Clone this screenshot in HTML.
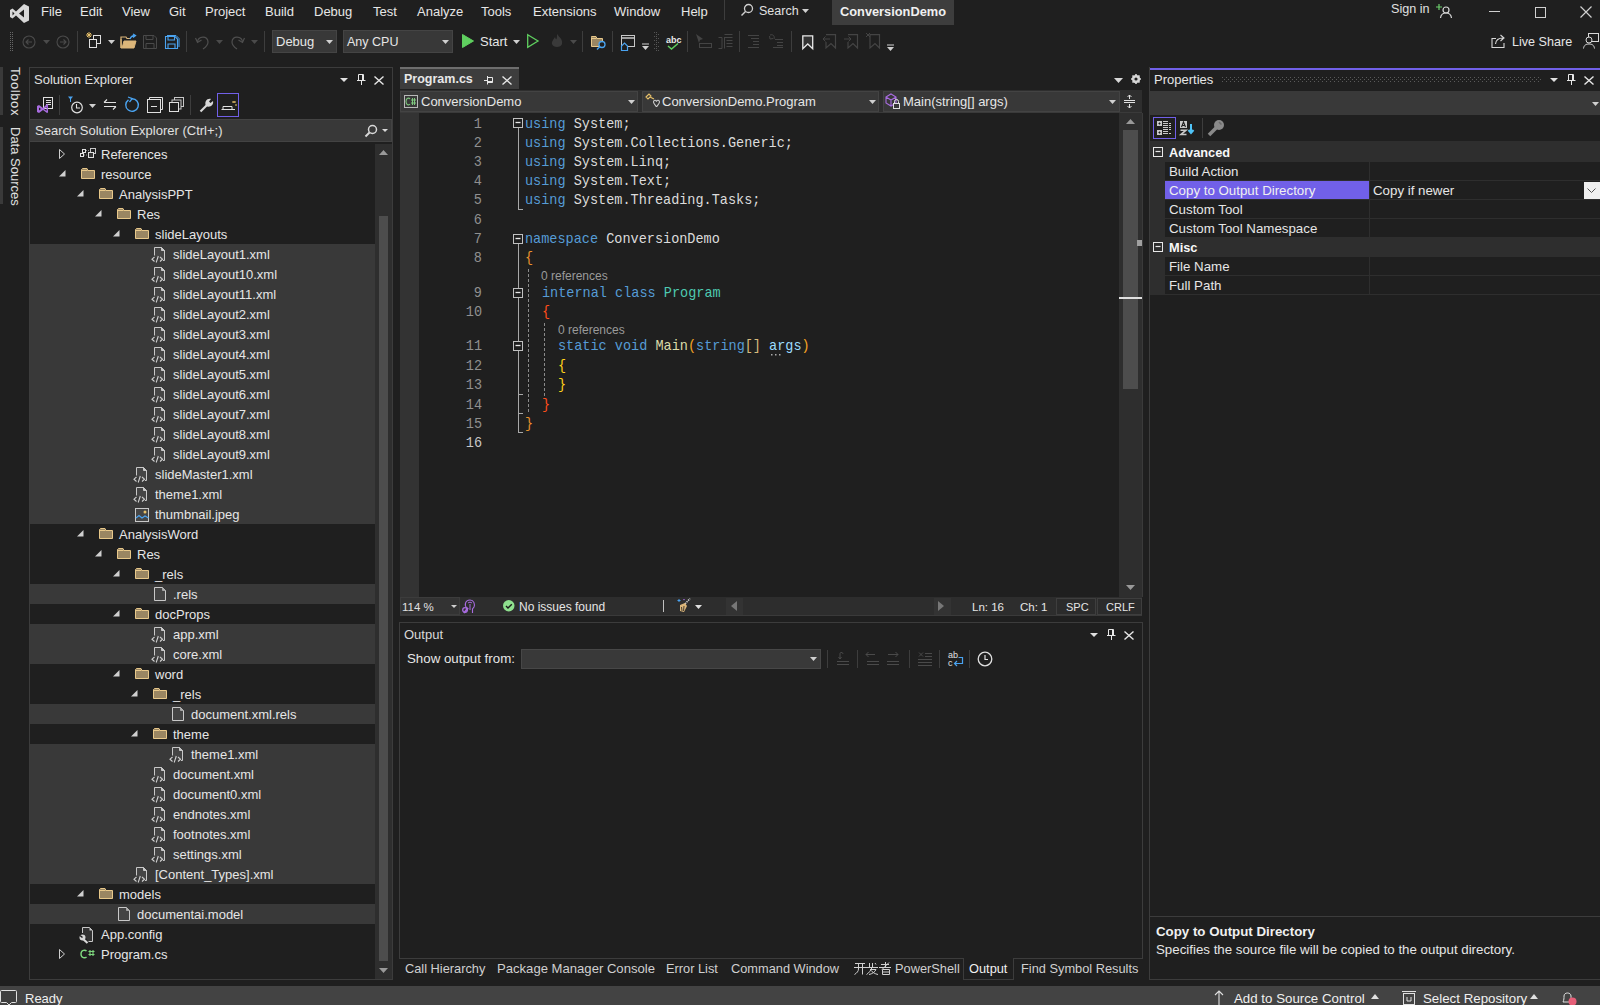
<!DOCTYPE html><html><head><meta charset="utf-8"><style>
*{margin:0;padding:0;box-sizing:border-box}
html,body{width:1600px;height:1005px;overflow:hidden;background:#1f1f1f;font-family:"Liberation Sans",sans-serif;color:#e0e0e0;font-size:13px}
.a{position:absolute;white-space:pre}
.t{position:absolute;white-space:pre;line-height:16px}
.mono{font-family:"Liberation Mono",monospace}
svg{position:absolute;overflow:visible}
</style></head><body><svg style="left:9px;top:3px" width="21" height="21" viewBox="0 0 21 21"><path d="M15 1 L20 3.5 V17.5 L15 20 L7 12.5 L3.5 15.5 L1 14 V7 L3.5 5.5 L7 8.5 Z M15 6.5 L10 10.5 L15 14.5 Z M3.5 8.5 V12.5 L5.5 10.5 Z" fill="#d8d8d8" fill-rule="evenodd"/></svg><div class="t" style="left:41px;top:4px;font-size:13px;color:#e6e6e6;font-weight:400;">File</div><div class="t" style="left:80px;top:4px;font-size:13px;color:#e6e6e6;font-weight:400;">Edit</div><div class="t" style="left:122px;top:4px;font-size:13px;color:#e6e6e6;font-weight:400;">View</div><div class="t" style="left:169px;top:4px;font-size:13px;color:#e6e6e6;font-weight:400;">Git</div><div class="t" style="left:205px;top:4px;font-size:13px;color:#e6e6e6;font-weight:400;">Project</div><div class="t" style="left:265px;top:4px;font-size:13px;color:#e6e6e6;font-weight:400;">Build</div><div class="t" style="left:314px;top:4px;font-size:13px;color:#e6e6e6;font-weight:400;">Debug</div><div class="t" style="left:373px;top:4px;font-size:13px;color:#e6e6e6;font-weight:400;">Test</div><div class="t" style="left:417px;top:4px;font-size:13px;color:#e6e6e6;font-weight:400;">Analyze</div><div class="t" style="left:481px;top:4px;font-size:13px;color:#e6e6e6;font-weight:400;">Tools</div><div class="t" style="left:533px;top:4px;font-size:13px;color:#e6e6e6;font-weight:400;">Extensions</div><div class="t" style="left:614px;top:4px;font-size:13px;color:#e6e6e6;font-weight:400;">Window</div><div class="t" style="left:681px;top:4px;font-size:13px;color:#e6e6e6;font-weight:400;">Help</div><div class="a" style="left:724px;top:0px;width:1px;height:20px;background:#3d3d3d;"></div><svg style="left:740px;top:3px" width="14" height="14" viewBox="0 0 14 14"><circle cx="8.5" cy="5.5" r="4" fill="none" stroke="#d0d0d0" stroke-width="1.3"/><path d="M5.5 8.5 L1.5 12.5" stroke="#d0d0d0" stroke-width="1.5"/></svg><div class="t" style="left:759px;top:3px;font-size:12.5px;color:#e0e0e0;font-weight:400;">Search</div><svg style="left:802px;top:9px" width="7" height="4" viewBox="0 0 7 4"><path d="M0 0 H7 L3.5 4 Z" fill="#d0d0d0"/></svg><div class="a" style="left:832px;top:0px;width:122px;height:25px;background:#3d3d3d;"></div><div class="t" style="left:840px;top:4px;font-size:12.8px;color:#f0f0f0;font-weight:700;">ConversionDemo</div><div class="t" style="left:1391px;top:1px;font-size:12.6px;color:#e0e0e0;font-weight:400;">Sign in</div><svg style="left:1437px;top:3px" width="16" height="16" viewBox="0 0 16 16"><path d="M2 1 V7 M-1 4 H5" stroke="#6ccf6c" stroke-width="1.2"/><circle cx="9" cy="7" r="3" fill="none" stroke="#d8d8d8" stroke-width="1.2"/><path d="M3.5 15 C4 11 6.5 10 9 10 C11.5 10 14 11 14.5 15" fill="none" stroke="#d8d8d8" stroke-width="1.2"/></svg><div class="a" style="left:1489px;top:11px;width:11px;height:1px;background:#d0d0d0;"></div><div class="a" style="left:1535px;top:7px;width:11px;height:11px;background:transparent;border:1.2px solid #d0d0d0"></div><svg style="left:1580px;top:6px" width="12" height="12" viewBox="0 0 12 12"><path d="M0.5 0.5 L11.5 11.5 M11.5 0.5 L0.5 11.5" stroke="#d0d0d0" stroke-width="1.2"/></svg><svg style="left:9px;top:32px" width="6" height="20" viewBox="0 0 6 20"><rect x="1" y="0" width="1" height="1" fill="#666"/><rect x="3" y="0" width="1" height="1" fill="#666"/><rect x="3" y="2" width="1" height="1" fill="#666"/><rect x="1" y="2" width="1" height="1" fill="#666"/><rect x="1" y="4" width="1" height="1" fill="#666"/><rect x="3" y="4" width="1" height="1" fill="#666"/><rect x="3" y="6" width="1" height="1" fill="#666"/><rect x="1" y="6" width="1" height="1" fill="#666"/><rect x="1" y="8" width="1" height="1" fill="#666"/><rect x="3" y="8" width="1" height="1" fill="#666"/><rect x="3" y="10" width="1" height="1" fill="#666"/><rect x="1" y="10" width="1" height="1" fill="#666"/><rect x="1" y="12" width="1" height="1" fill="#666"/><rect x="3" y="12" width="1" height="1" fill="#666"/><rect x="3" y="14" width="1" height="1" fill="#666"/><rect x="1" y="14" width="1" height="1" fill="#666"/><rect x="1" y="16" width="1" height="1" fill="#666"/><rect x="3" y="16" width="1" height="1" fill="#666"/><rect x="3" y="18" width="1" height="1" fill="#666"/><rect x="1" y="18" width="1" height="1" fill="#666"/></svg><svg style="left:22px;top:35px" width="14" height="14" viewBox="0 0 14 14"><circle cx="7" cy="7" r="6" fill="none" stroke="#4a4a4a" stroke-width="1.1"/><path d="M10 7 H4 M6.5 4.5 L4 7 L6.5 9.5" fill="none" stroke="#4a4a4a" stroke-width="1.1"/></svg><svg style="left:43px;top:40px" width="7" height="4" viewBox="0 0 7 4"><path d="M0 0 H7 L3.5 4 Z" fill="#4a4a4a"/></svg><svg style="left:56px;top:35px" width="14" height="14" viewBox="0 0 14 14"><circle cx="7" cy="7" r="6" fill="none" stroke="#4a4a4a" stroke-width="1.1"/><path d="M4 7 H10 M7.5 4.5 L10 7 L7.5 9.5" fill="none" stroke="#4a4a4a" stroke-width="1.1"/></svg><div class="a" style="left:77px;top:31px;width:1px;height:21px;background:#3d3d3d;"></div><svg style="left:86px;top:32px" width="17" height="17" viewBox="0 0 17 17"><path d="M3 0 V6 M0 3 H6 M1 1 L5 5 M5 1 L1 5" stroke="#e8c16a" stroke-width="1"/><rect x="7.5" y="3.5" width="7" height="8" fill="#1f1f1f" stroke="#e0e0e0"/><rect x="3.5" y="7.5" width="7" height="8" fill="#1f1f1f" stroke="#e0e0e0"/></svg><svg style="left:108px;top:40px" width="7" height="4" viewBox="0 0 7 4"><path d="M0 0 H7 L3.5 4 Z" fill="#d0d0d0"/></svg><svg style="left:120px;top:34px" width="17" height="15" viewBox="0 0 17 15"><path d="M1 5 V14 H14 L16 7 H4 L2 14" fill="#dcb67a" stroke="#dcb67a"/><path d="M1 14 V3 H6 L7 4.5 H10" fill="none" stroke="#dcb67a" stroke-width="1.2"/><path d="M10 5 C11 2 13 1.5 15 1.5 M13 0 L15.5 1.5 L13 3.5" fill="none" stroke="#4aa3f0" stroke-width="1.3"/></svg><svg style="left:143px;top:35px" width="14" height="14" viewBox="0 0 14 14"><path d="M0.5 0.5 H11 L13.5 3 V13.5 H0.5 Z M3 0.5 V4.5 H10 V0.5 M3 13.5 V8.5 H11 V13.5" fill="none" stroke="#4a4a4a"/></svg><svg style="left:165px;top:35px" width="15" height="15" viewBox="0 0 15 15"><path d="M0.5 1.5 H10 L12.5 4 V13.5 H0.5 Z M3 1.5 V5 H9.5 V1.5 M3 13.5 V9 H10 V13.5" fill="none" stroke="#4aa3f0" stroke-width="1.1"/><path d="M2 0.5 H11 L14 3.5 V12" fill="none" stroke="#4aa3f0"/></svg><div class="a" style="left:186px;top:31px;width:1px;height:21px;background:#3d3d3d;"></div><svg style="left:195px;top:34px" width="15" height="16" viewBox="0 0 15 16"><path d="M2.5 8 C3 2 13 1 13 8 C13 11 11 13 8 15" fill="none" stroke="#4f4f4f" stroke-width="1.2"/><path d="M0.5 4 L2.5 8.5 L6.5 6" fill="none" stroke="#4f4f4f" stroke-width="1.2"/></svg><svg style="left:216px;top:40px" width="7" height="4" viewBox="0 0 7 4"><path d="M0 0 H7 L3.5 4 Z" fill="#4a4a4a"/></svg><svg style="left:230px;top:34px" width="15" height="16" viewBox="0 0 15 16"><path d="M12.5 8 C12 2 2 1 2 8 C2 11 4 13 7 15" fill="none" stroke="#4f4f4f" stroke-width="1.2"/><path d="M14.5 4 L12.5 8.5 L8.5 6" fill="none" stroke="#4f4f4f" stroke-width="1.2"/></svg><svg style="left:251px;top:40px" width="7" height="4" viewBox="0 0 7 4"><path d="M0 0 H7 L3.5 4 Z" fill="#4a4a4a"/></svg><div class="a" style="left:264px;top:31px;width:1px;height:21px;background:#3d3d3d;"></div><div class="a" style="left:272px;top:30px;width:65px;height:23px;background:#383838;border:1px solid #444"></div><div class="t" style="left:276px;top:34px;font-size:13px;color:#e6e6e6;font-weight:400;">Debug</div><svg style="left:326px;top:40px" width="7" height="4" viewBox="0 0 7 4"><path d="M0 0 H7 L3.5 4 Z" fill="#d0d0d0"/></svg><div class="a" style="left:343px;top:30px;width:110px;height:23px;background:#383838;border:1px solid #444"></div><div class="t" style="left:347px;top:34px;font-size:12.5px;color:#e6e6e6;font-weight:400;">Any CPU</div><svg style="left:442px;top:40px" width="7" height="4" viewBox="0 0 7 4"><path d="M0 0 H7 L3.5 4 Z" fill="#d0d0d0"/></svg><svg style="left:462px;top:34px" width="12" height="14" viewBox="0 0 12 14"><path d="M0.5 0.5 L11.5 7 L0.5 13.5 Z" fill="#5fcf5f" stroke="#5fcf5f"/></svg><div class="t" style="left:480px;top:34px;font-size:13px;color:#e6e6e6;font-weight:400;">Start</div><svg style="left:513px;top:40px" width="7" height="4" viewBox="0 0 7 4"><path d="M0 0 H7 L3.5 4 Z" fill="#d0d0d0"/></svg><svg style="left:527px;top:34px" width="12" height="14" viewBox="0 0 12 14"><path d="M0.7 0.7 L11 7 L0.7 13.3 Z" fill="none" stroke="#5fcf5f" stroke-width="1.3"/></svg><svg style="left:550px;top:33px" width="14" height="16" viewBox="0 0 14 16"><path d="M7 1 C9 4 13 6 12 11 C11 15 3 15 2 11 C1.5 8 4 6 5 4 C6 7 7 8 7 1 Z" fill="#3a3a3a"/></svg><svg style="left:570px;top:40px" width="7" height="4" viewBox="0 0 7 4"><path d="M0 0 H7 L3.5 4 Z" fill="#4a4a4a"/></svg><div class="a" style="left:582px;top:31px;width:1px;height:21px;background:#3d3d3d;"></div><svg style="left:590px;top:35px" width="17" height="16" viewBox="0 0 17 16"><path d="M1.5 2.5 V11.5 H12.5 V3.5 H7 L6 1.5 H1.5 Z" fill="#9a8662" stroke="#e8c88a"/><path d="M2 3.5 H6.5" stroke="#e8c88a"/><circle cx="12" cy="9.5" r="3" fill="#1f1f1f" stroke="#4aa3f0" stroke-width="1.3"/><path d="M9.8 11.8 L7 14.5" stroke="#4aa3f0" stroke-width="1.4"/></svg><div class="a" style="left:612px;top:31px;width:1px;height:21px;background:#3d3d3d;"></div><svg style="left:620px;top:35px" width="17" height="17" viewBox="0 0 17 17"><rect x="1.5" y="0.5" width="13" height="11" fill="#1f1f1f" stroke="#c8c8c8"/><path d="M1.5 3 H14.5" stroke="#c8c8c8" stroke-width="1.5"/><path d="M1.5 15.5 V11 L4.5 8 L7.5 11 V15.5 Z" fill="#1f1f1f" stroke="#4aa3f0" stroke-width="1.2"/></svg><svg style="left:642px;top:44px" width="7" height="6" viewBox="0 0 7 6"><path d="M0 0 H7" stroke="#d0d0d0"/><path d="M0 2 H7 L3.5 6 Z" fill="#d0d0d0"/></svg><svg style="left:654px;top:32px" width="5" height="20" viewBox="0 0 5 20"><rect x="0" y="0" width="1" height="1" fill="#555"/><rect x="2" y="0" width="1" height="1" fill="#555"/><rect x="2" y="2" width="1" height="1" fill="#555"/><rect x="4" y="2" width="1" height="1" fill="#555"/><rect x="0" y="4" width="1" height="1" fill="#555"/><rect x="2" y="4" width="1" height="1" fill="#555"/><rect x="2" y="6" width="1" height="1" fill="#555"/><rect x="4" y="6" width="1" height="1" fill="#555"/><rect x="0" y="8" width="1" height="1" fill="#555"/><rect x="2" y="8" width="1" height="1" fill="#555"/><rect x="2" y="10" width="1" height="1" fill="#555"/><rect x="4" y="10" width="1" height="1" fill="#555"/><rect x="0" y="12" width="1" height="1" fill="#555"/><rect x="2" y="12" width="1" height="1" fill="#555"/><rect x="2" y="14" width="1" height="1" fill="#555"/><rect x="4" y="14" width="1" height="1" fill="#555"/><rect x="0" y="16" width="1" height="1" fill="#555"/><rect x="2" y="16" width="1" height="1" fill="#555"/><rect x="2" y="18" width="1" height="1" fill="#555"/><rect x="4" y="18" width="1" height="1" fill="#555"/></svg><div class="t" style="left:666px;top:32px;font-size:9px;color:#e8e8e8;font-weight:700;">abc</div><svg style="left:667px;top:43px" width="12" height="7" viewBox="0 0 12 7"><path d="M1 3 L4.5 6 L11 0.5" fill="none" stroke="#5fcf5f" stroke-width="1.5"/></svg><div class="a" style="left:687px;top:31px;width:1px;height:21px;background:#3d3d3d;"></div><svg style="left:695px;top:34px" width="17" height="15" viewBox="0 0 17 15"><path d="M1 0 L4 9 L5 6 L8 5 Z" fill="#444"/><rect x="4.5" y="9.5" width="12" height="4" fill="none" stroke="#444"/></svg><svg style="left:718px;top:34px" width="15" height="15" viewBox="0 0 15 15"><path d="M0.5 3.5 H4 V14.5 H0.5 M6.5 0.5 H14.5 M6.5 3.5 H14.5 M8.5 6.5 H14.5 M8.5 9.5 H14.5 M8.5 12.5 H14.5 M6.5 3 V14.5" fill="none" stroke="#444"/></svg><div class="a" style="left:739px;top:31px;width:1px;height:21px;background:#3d3d3d;"></div><svg style="left:748px;top:35px" width="12" height="13" viewBox="0 0 12 13"><path d="M0 0.5 H11 M3 3.5 H11 M5 6.5 H11 M5 9.5 H11 M0 12.5 H11" stroke="#444"/></svg><svg style="left:769px;top:34px" width="15" height="14" viewBox="0 0 15 14"><path d="M1 1 C4 0 6 2 5 5 M0.5 2 L1 5 L4 4.5 M6 5.5 H14 M8 8.5 H14 M8 11.5 H14 M4 13.5 H14" fill="none" stroke="#444"/></svg><div class="a" style="left:791px;top:31px;width:1px;height:21px;background:#3d3d3d;"></div><svg style="left:802px;top:35px" width="12" height="15" viewBox="0 0 12 15"><path d="M0.8 0.8 H10.7 V13.8 L5.75 9 L0.8 13.8 Z" fill="#333" stroke="#e8e8e8" stroke-width="1.3"/></svg><svg style="left:822px;top:34px" width="15" height="15" viewBox="0 0 15 15"><path d="M4 0.7 H13.5 V14 L9 9.5 L4 14 V8" fill="none" stroke="#444" stroke-width="1.2"/><path d="M8 5 H1 M3.5 2.5 L1 5 L3.5 7.5" fill="none" stroke="#444"/></svg><svg style="left:844px;top:34px" width="15" height="15" viewBox="0 0 15 15"><path d="M4 0.7 H13.5 V14 L9 9.5 L4 14 V8" fill="none" stroke="#444" stroke-width="1.2"/><path d="M0 5 H7 M4.5 2.5 L7 5 L4.5 7.5" fill="none" stroke="#444"/></svg><svg style="left:866px;top:33px" width="15" height="16" viewBox="0 0 15 16"><path d="M4 1.7 H13.5 V15 L9 10.5 L4 15 Z" fill="none" stroke="#444" stroke-width="1.2"/><path d="M0 0 L4 4 M4 0 L0 4" stroke="#444"/></svg><svg style="left:887px;top:45px" width="7" height="6" viewBox="0 0 7 6"><path d="M0 0 H7" stroke="#d0d0d0"/><path d="M0 2 H7 L3.5 6 Z" fill="#d0d0d0"/></svg><svg style="left:1491px;top:33px" width="16" height="16" viewBox="0 0 16 16"><path d="M5 5.5 H1 V14.5 H13 V10" fill="none" stroke="#d8d8d8" stroke-width="1.1"/><path d="M4.5 11 C5 6 8 5 12 5 M9.5 2 L13 5 L9.5 8" fill="none" stroke="#d8d8d8" stroke-width="1.1"/></svg><div class="t" style="left:1512px;top:34px;font-size:12.6px;color:#e6e6e6;font-weight:400;">Live Share</div><svg style="left:1583px;top:33px" width="16" height="16" viewBox="0 0 16 16"><rect x="5.5" y="0.5" width="10" height="8" fill="none" stroke="#d8d8d8"/><circle cx="6" cy="7" r="3" fill="#1f1f1f" stroke="#d8d8d8"/><path d="M0.5 15.5 C1 12 3 11 6 11 C9 11 11 12 11.5 15.5" fill="none" stroke="#d8d8d8"/></svg><div class="a" style="left:0px;top:67px;width:3px;height:48px;background:#3a3a3a;"></div><div class="a" style="left:0px;top:127px;width:3px;height:77px;background:#3a3a3a;"></div><div class="a" style="left:22px;top:67px;transform-origin:0 0;transform:rotate(90deg);font-size:13px;line-height:13px;letter-spacing:0.6px;color:#e0e0e0">Toolbox</div><div class="a" style="left:22px;top:127px;transform-origin:0 0;transform:rotate(90deg);font-size:13px;line-height:13px;color:#e0e0e0">Data Sources</div><div class="a" style="left:29px;top:67px;width:364px;height:913px;background:#1f1f1f;border:1px solid #3c3c3c"></div><div class="t" style="left:34px;top:72px;font-size:13px;color:#e0e0e0;font-weight:400;">Solution Explorer</div><svg style="left:340px;top:78px" width="8" height="4" viewBox="0 0 8 4"><path d="M0 0 H8 L4 4 Z" fill="#e0e0e0"/></svg><svg style="left:357px;top:74px" width="9" height="12" viewBox="0 0 9 12"><path d="M1.5 0.5 H6.5 V6.5 H1.5 Z" fill="none" stroke="#e8e8e8"/><rect x="5" y="1" width="1.5" height="5.5" fill="#e8e8e8"/><path d="M0 6.5 H8.5 M4.5 6.5 V11" stroke="#e8e8e8"/></svg><svg style="left:374px;top:76px" width="10" height="9" viewBox="0 0 10 9"><path d="M0.5 0.5 L9.5 8.5 M9.5 0.5 L0.5 8.5" stroke="#e8e8e8" stroke-width="1.4"/></svg><svg style="left:36px;top:96px" width="17" height="18" viewBox="0 0 17 18"><rect x="7.5" y="1.5" width="9" height="11" fill="#1f1f1f" stroke="#e0e0e0"/><path d="M10 4.5 H15 M10 6.5 H15 M10 8.5 H15" stroke="#e0e0e0"/><path d="M1 10 L3 9 L7 12 L11 8 L12 8.5 V16.5 L11 17 L7 14 L3 17 L1 16 Z M3 11.5 V14.5 L5 13 Z M8 13 L10.5 15 V11 Z" fill="#a86ce0" fill-rule="evenodd"/></svg><div class="a" style="left:59px;top:95px;width:1px;height:20px;background:#3d3d3d;"></div><svg style="left:67px;top:96px" width="17" height="18" viewBox="0 0 17 18"><path d="M1 0.5 H6 L4 3 V6 H3 V3 Z" fill="#4aa3f0"/><circle cx="10" cy="11.5" r="5.3" fill="none" stroke="#e0e0e0" stroke-width="1.2"/><path d="M9.5 8 V12 H13" fill="none" stroke="#e0e0e0" stroke-width="1.1"/></svg><svg style="left:89px;top:104px" width="7" height="4" viewBox="0 0 7 4"><path d="M0 0 H7 L3.5 4 Z" fill="#d0d0d0"/></svg><svg style="left:103px;top:98px" width="14" height="13" viewBox="0 0 14 13"><path d="M1 4.5 H13 M1 4.5 L4 1.5 M13 8.5 H1 M13 8.5 L10 11.5" stroke="#e0e0e0" stroke-width="1.1" fill="none"/></svg><svg style="left:124px;top:97px" width="16" height="16" viewBox="0 0 16 16"><path d="M4.5 2.8 A6.3 6.3 0 1 0 8 1.7" fill="none" stroke="#4aa3f0" stroke-width="1.4"/><path d="M4 0 L8.2 1.6 L5.5 5" fill="none" stroke="#4aa3f0" stroke-width="1.3"/></svg><svg style="left:147px;top:97px" width="16" height="16" viewBox="0 0 16 16"><path d="M2.5 2.5 V0.5 H15.5 V12.5 H13.5" fill="none" stroke="#e0e0e0"/><rect x="0.5" y="2.5" width="13" height="13" fill="#1f1f1f" stroke="#e0e0e0"/><path d="M4 9.5 H10" stroke="#e0e0e0"/></svg><svg style="left:169px;top:97px" width="15" height="15" viewBox="0 0 15 15"><rect x="5.5" y="0.5" width="9" height="9" fill="none" stroke="#c8c8c8"/><rect x="3" y="3" width="9" height="9" fill="#1f1f1f" stroke="#c8c8c8"/><rect x="0.5" y="5.5" width="9" height="9" fill="#1f1f1f" stroke="#e0e0e0"/></svg><div class="a" style="left:190px;top:95px;width:1px;height:20px;background:#3d3d3d;"></div><svg style="left:199px;top:97px" width="16" height="16" viewBox="0 0 16 16"><path d="M1.5 14.5 L8 8" stroke="#d8d8d8" stroke-width="2.2"/><path d="M7 9 C5 5 8 1 12 2 L10 4.5 L11.5 6 L14 4 C15 8 11 11 7 9" fill="#d8d8d8"/></svg><div class="a" style="left:217px;top:93px;width:22px;height:24px;background:transparent;border:1px solid #7160e8"></div><svg style="left:221px;top:100px" width="16" height="10" viewBox="0 0 16 10"><path d="M0.5 9.5 H14 M2 9 V6.5 H11 V9" fill="none" stroke="#e0e0e0"/><path d="M13 1 V3 M11 2 H15 M14 5 H16" stroke="#e8c16a"/></svg><div class="a" style="left:30px;top:119px;width:362px;height:23px;background:#383838;border:1px solid #434343;border-left:none"></div><div class="t" style="left:35px;top:123px;font-size:13px;color:#e0e0e0;font-weight:400;">Search Solution Explorer (Ctrl+;)</div><svg style="left:364px;top:124px" width="14" height="14" viewBox="0 0 14 14"><circle cx="8.5" cy="5.5" r="4" fill="none" stroke="#d8d8d8" stroke-width="1.5"/><path d="M5.5 8.5 L1.5 12.5" stroke="#d8d8d8" stroke-width="2"/></svg><svg style="left:382px;top:129px" width="6" height="3" viewBox="0 0 6 3"><path d="M0 0 H6 L3 3 Z" fill="#d8d8d8"/></svg><div class="a" style="left:0;top:0;width:375px;height:978px;overflow:hidden;clip-path:inset(142px 0 0 30px)"><svg style="left:59px;top:149px" width="6" height="10" viewBox="0 0 6 10"><path d="M0.5 0.5 L5.5 5 L0.5 9.5 Z" fill="none" stroke="#d0d0d0"/></svg><svg style="left:80px;top:148px" width="17" height="12" viewBox="0 0 17 12"><rect x="2.5" y="1.5" width="3" height="3" fill="none" stroke="#e0e0e0"/><rect x="0.5" y="5.5" width="3" height="3" fill="none" stroke="#e0e0e0"/><rect x="10.5" y="0.5" width="5" height="5" fill="#1f1f1f" stroke="#c8c8c8"/><rect x="8.5" y="4.5" width="5" height="5" fill="#333" stroke="#e0e0e0"/><path d="M6 2.5 H10 M4 7 H8" stroke="#8a8a8a" stroke-dasharray="1 1"/></svg><div class="t" style="left:101px;top:147px;font-size:13px;color:#e6e6e6;font-weight:400;">References</div><svg style="left:59px;top:170px" width="7" height="7" viewBox="0 0 7 7"><path d="M6.5 0 V6.5 H0 Z" fill="#d0d0d0"/></svg><svg style="left:81px;top:168px" width="15" height="12" viewBox="0 0 15 12"><path d="M0.5 1.5 V10.5 H13.5 V2.5 H7 L6 0.5 H1.5 Z" fill="#9a8662" stroke="#e8c88a"/><path d="M1 2.5 H6.5" stroke="#e8c88a"/></svg><div class="t" style="left:101px;top:167px;font-size:13px;color:#e6e6e6;font-weight:400;">resource</div><svg style="left:77px;top:190px" width="7" height="7" viewBox="0 0 7 7"><path d="M6.5 0 V6.5 H0 Z" fill="#d0d0d0"/></svg><svg style="left:99px;top:188px" width="15" height="12" viewBox="0 0 15 12"><path d="M0.5 1.5 V10.5 H13.5 V2.5 H7 L6 0.5 H1.5 Z" fill="#9a8662" stroke="#e8c88a"/><path d="M1 2.5 H6.5" stroke="#e8c88a"/></svg><div class="t" style="left:119px;top:187px;font-size:13px;color:#e6e6e6;font-weight:400;">AnalysisPPT</div><svg style="left:95px;top:210px" width="7" height="7" viewBox="0 0 7 7"><path d="M6.5 0 V6.5 H0 Z" fill="#d0d0d0"/></svg><svg style="left:117px;top:208px" width="15" height="12" viewBox="0 0 15 12"><path d="M0.5 1.5 V10.5 H13.5 V2.5 H7 L6 0.5 H1.5 Z" fill="#9a8662" stroke="#e8c88a"/><path d="M1 2.5 H6.5" stroke="#e8c88a"/></svg><div class="t" style="left:137px;top:207px;font-size:13px;color:#e6e6e6;font-weight:400;">Res</div><svg style="left:113px;top:230px" width="7" height="7" viewBox="0 0 7 7"><path d="M6.5 0 V6.5 H0 Z" fill="#d0d0d0"/></svg><svg style="left:135px;top:228px" width="15" height="12" viewBox="0 0 15 12"><path d="M0.5 1.5 V10.5 H13.5 V2.5 H7 L6 0.5 H1.5 Z" fill="#9a8662" stroke="#e8c88a"/><path d="M1 2.5 H6.5" stroke="#e8c88a"/></svg><div class="t" style="left:155px;top:227px;font-size:13px;color:#e6e6e6;font-weight:400;">slideLayouts</div><div class="a" style="left:30px;top:244px;width:345px;height:20px;background:#393939;"></div><svg style="left:151px;top:247px" width="15" height="16" viewBox="0 0 15 16"><path d="M3.5 9 V0.5 H10.5 L13.5 3.5 V13.5 H11.5 M3.5 9 H10 V13.5" fill="#454545" stroke="none"/><path d="M3.5 8.5 V0.5 H10.5 L13.5 3.5 V13.5 H12" fill="none" stroke="#c8c8c8"/><path d="M10.5 0.5 V3.5 H13.5 Z" fill="#c8c8c8" stroke="#c8c8c8"/><path d="M3.5 10 L1 12.2 L3.5 14.5 M5.2 15.5 L7.3 9 M9 10 L11.5 12.2 L9 14.5" fill="none" stroke="#d0d0d0" stroke-width="1.1"/></svg><div class="t" style="left:173px;top:247px;font-size:13px;color:#e6e6e6;font-weight:400;">slideLayout1.xml</div><div class="a" style="left:30px;top:264px;width:345px;height:20px;background:#393939;"></div><svg style="left:151px;top:267px" width="15" height="16" viewBox="0 0 15 16"><path d="M3.5 9 V0.5 H10.5 L13.5 3.5 V13.5 H11.5 M3.5 9 H10 V13.5" fill="#454545" stroke="none"/><path d="M3.5 8.5 V0.5 H10.5 L13.5 3.5 V13.5 H12" fill="none" stroke="#c8c8c8"/><path d="M10.5 0.5 V3.5 H13.5 Z" fill="#c8c8c8" stroke="#c8c8c8"/><path d="M3.5 10 L1 12.2 L3.5 14.5 M5.2 15.5 L7.3 9 M9 10 L11.5 12.2 L9 14.5" fill="none" stroke="#d0d0d0" stroke-width="1.1"/></svg><div class="t" style="left:173px;top:267px;font-size:13px;color:#e6e6e6;font-weight:400;">slideLayout10.xml</div><div class="a" style="left:30px;top:284px;width:345px;height:20px;background:#393939;"></div><svg style="left:151px;top:287px" width="15" height="16" viewBox="0 0 15 16"><path d="M3.5 9 V0.5 H10.5 L13.5 3.5 V13.5 H11.5 M3.5 9 H10 V13.5" fill="#454545" stroke="none"/><path d="M3.5 8.5 V0.5 H10.5 L13.5 3.5 V13.5 H12" fill="none" stroke="#c8c8c8"/><path d="M10.5 0.5 V3.5 H13.5 Z" fill="#c8c8c8" stroke="#c8c8c8"/><path d="M3.5 10 L1 12.2 L3.5 14.5 M5.2 15.5 L7.3 9 M9 10 L11.5 12.2 L9 14.5" fill="none" stroke="#d0d0d0" stroke-width="1.1"/></svg><div class="t" style="left:173px;top:287px;font-size:13px;color:#e6e6e6;font-weight:400;">slideLayout11.xml</div><div class="a" style="left:30px;top:304px;width:345px;height:20px;background:#393939;"></div><svg style="left:151px;top:307px" width="15" height="16" viewBox="0 0 15 16"><path d="M3.5 9 V0.5 H10.5 L13.5 3.5 V13.5 H11.5 M3.5 9 H10 V13.5" fill="#454545" stroke="none"/><path d="M3.5 8.5 V0.5 H10.5 L13.5 3.5 V13.5 H12" fill="none" stroke="#c8c8c8"/><path d="M10.5 0.5 V3.5 H13.5 Z" fill="#c8c8c8" stroke="#c8c8c8"/><path d="M3.5 10 L1 12.2 L3.5 14.5 M5.2 15.5 L7.3 9 M9 10 L11.5 12.2 L9 14.5" fill="none" stroke="#d0d0d0" stroke-width="1.1"/></svg><div class="t" style="left:173px;top:307px;font-size:13px;color:#e6e6e6;font-weight:400;">slideLayout2.xml</div><div class="a" style="left:30px;top:324px;width:345px;height:20px;background:#393939;"></div><svg style="left:151px;top:327px" width="15" height="16" viewBox="0 0 15 16"><path d="M3.5 9 V0.5 H10.5 L13.5 3.5 V13.5 H11.5 M3.5 9 H10 V13.5" fill="#454545" stroke="none"/><path d="M3.5 8.5 V0.5 H10.5 L13.5 3.5 V13.5 H12" fill="none" stroke="#c8c8c8"/><path d="M10.5 0.5 V3.5 H13.5 Z" fill="#c8c8c8" stroke="#c8c8c8"/><path d="M3.5 10 L1 12.2 L3.5 14.5 M5.2 15.5 L7.3 9 M9 10 L11.5 12.2 L9 14.5" fill="none" stroke="#d0d0d0" stroke-width="1.1"/></svg><div class="t" style="left:173px;top:327px;font-size:13px;color:#e6e6e6;font-weight:400;">slideLayout3.xml</div><div class="a" style="left:30px;top:344px;width:345px;height:20px;background:#393939;"></div><svg style="left:151px;top:347px" width="15" height="16" viewBox="0 0 15 16"><path d="M3.5 9 V0.5 H10.5 L13.5 3.5 V13.5 H11.5 M3.5 9 H10 V13.5" fill="#454545" stroke="none"/><path d="M3.5 8.5 V0.5 H10.5 L13.5 3.5 V13.5 H12" fill="none" stroke="#c8c8c8"/><path d="M10.5 0.5 V3.5 H13.5 Z" fill="#c8c8c8" stroke="#c8c8c8"/><path d="M3.5 10 L1 12.2 L3.5 14.5 M5.2 15.5 L7.3 9 M9 10 L11.5 12.2 L9 14.5" fill="none" stroke="#d0d0d0" stroke-width="1.1"/></svg><div class="t" style="left:173px;top:347px;font-size:13px;color:#e6e6e6;font-weight:400;">slideLayout4.xml</div><div class="a" style="left:30px;top:364px;width:345px;height:20px;background:#393939;"></div><svg style="left:151px;top:367px" width="15" height="16" viewBox="0 0 15 16"><path d="M3.5 9 V0.5 H10.5 L13.5 3.5 V13.5 H11.5 M3.5 9 H10 V13.5" fill="#454545" stroke="none"/><path d="M3.5 8.5 V0.5 H10.5 L13.5 3.5 V13.5 H12" fill="none" stroke="#c8c8c8"/><path d="M10.5 0.5 V3.5 H13.5 Z" fill="#c8c8c8" stroke="#c8c8c8"/><path d="M3.5 10 L1 12.2 L3.5 14.5 M5.2 15.5 L7.3 9 M9 10 L11.5 12.2 L9 14.5" fill="none" stroke="#d0d0d0" stroke-width="1.1"/></svg><div class="t" style="left:173px;top:367px;font-size:13px;color:#e6e6e6;font-weight:400;">slideLayout5.xml</div><div class="a" style="left:30px;top:384px;width:345px;height:20px;background:#393939;"></div><svg style="left:151px;top:387px" width="15" height="16" viewBox="0 0 15 16"><path d="M3.5 9 V0.5 H10.5 L13.5 3.5 V13.5 H11.5 M3.5 9 H10 V13.5" fill="#454545" stroke="none"/><path d="M3.5 8.5 V0.5 H10.5 L13.5 3.5 V13.5 H12" fill="none" stroke="#c8c8c8"/><path d="M10.5 0.5 V3.5 H13.5 Z" fill="#c8c8c8" stroke="#c8c8c8"/><path d="M3.5 10 L1 12.2 L3.5 14.5 M5.2 15.5 L7.3 9 M9 10 L11.5 12.2 L9 14.5" fill="none" stroke="#d0d0d0" stroke-width="1.1"/></svg><div class="t" style="left:173px;top:387px;font-size:13px;color:#e6e6e6;font-weight:400;">slideLayout6.xml</div><div class="a" style="left:30px;top:404px;width:345px;height:20px;background:#393939;"></div><svg style="left:151px;top:407px" width="15" height="16" viewBox="0 0 15 16"><path d="M3.5 9 V0.5 H10.5 L13.5 3.5 V13.5 H11.5 M3.5 9 H10 V13.5" fill="#454545" stroke="none"/><path d="M3.5 8.5 V0.5 H10.5 L13.5 3.5 V13.5 H12" fill="none" stroke="#c8c8c8"/><path d="M10.5 0.5 V3.5 H13.5 Z" fill="#c8c8c8" stroke="#c8c8c8"/><path d="M3.5 10 L1 12.2 L3.5 14.5 M5.2 15.5 L7.3 9 M9 10 L11.5 12.2 L9 14.5" fill="none" stroke="#d0d0d0" stroke-width="1.1"/></svg><div class="t" style="left:173px;top:407px;font-size:13px;color:#e6e6e6;font-weight:400;">slideLayout7.xml</div><div class="a" style="left:30px;top:424px;width:345px;height:20px;background:#393939;"></div><svg style="left:151px;top:427px" width="15" height="16" viewBox="0 0 15 16"><path d="M3.5 9 V0.5 H10.5 L13.5 3.5 V13.5 H11.5 M3.5 9 H10 V13.5" fill="#454545" stroke="none"/><path d="M3.5 8.5 V0.5 H10.5 L13.5 3.5 V13.5 H12" fill="none" stroke="#c8c8c8"/><path d="M10.5 0.5 V3.5 H13.5 Z" fill="#c8c8c8" stroke="#c8c8c8"/><path d="M3.5 10 L1 12.2 L3.5 14.5 M5.2 15.5 L7.3 9 M9 10 L11.5 12.2 L9 14.5" fill="none" stroke="#d0d0d0" stroke-width="1.1"/></svg><div class="t" style="left:173px;top:427px;font-size:13px;color:#e6e6e6;font-weight:400;">slideLayout8.xml</div><div class="a" style="left:30px;top:444px;width:345px;height:20px;background:#393939;"></div><svg style="left:151px;top:447px" width="15" height="16" viewBox="0 0 15 16"><path d="M3.5 9 V0.5 H10.5 L13.5 3.5 V13.5 H11.5 M3.5 9 H10 V13.5" fill="#454545" stroke="none"/><path d="M3.5 8.5 V0.5 H10.5 L13.5 3.5 V13.5 H12" fill="none" stroke="#c8c8c8"/><path d="M10.5 0.5 V3.5 H13.5 Z" fill="#c8c8c8" stroke="#c8c8c8"/><path d="M3.5 10 L1 12.2 L3.5 14.5 M5.2 15.5 L7.3 9 M9 10 L11.5 12.2 L9 14.5" fill="none" stroke="#d0d0d0" stroke-width="1.1"/></svg><div class="t" style="left:173px;top:447px;font-size:13px;color:#e6e6e6;font-weight:400;">slideLayout9.xml</div><div class="a" style="left:30px;top:464px;width:345px;height:20px;background:#393939;"></div><svg style="left:133px;top:467px" width="15" height="16" viewBox="0 0 15 16"><path d="M3.5 9 V0.5 H10.5 L13.5 3.5 V13.5 H11.5 M3.5 9 H10 V13.5" fill="#454545" stroke="none"/><path d="M3.5 8.5 V0.5 H10.5 L13.5 3.5 V13.5 H12" fill="none" stroke="#c8c8c8"/><path d="M10.5 0.5 V3.5 H13.5 Z" fill="#c8c8c8" stroke="#c8c8c8"/><path d="M3.5 10 L1 12.2 L3.5 14.5 M5.2 15.5 L7.3 9 M9 10 L11.5 12.2 L9 14.5" fill="none" stroke="#d0d0d0" stroke-width="1.1"/></svg><div class="t" style="left:155px;top:467px;font-size:13px;color:#e6e6e6;font-weight:400;">slideMaster1.xml</div><div class="a" style="left:30px;top:484px;width:345px;height:20px;background:#393939;"></div><svg style="left:133px;top:487px" width="15" height="16" viewBox="0 0 15 16"><path d="M3.5 9 V0.5 H10.5 L13.5 3.5 V13.5 H11.5 M3.5 9 H10 V13.5" fill="#454545" stroke="none"/><path d="M3.5 8.5 V0.5 H10.5 L13.5 3.5 V13.5 H12" fill="none" stroke="#c8c8c8"/><path d="M10.5 0.5 V3.5 H13.5 Z" fill="#c8c8c8" stroke="#c8c8c8"/><path d="M3.5 10 L1 12.2 L3.5 14.5 M5.2 15.5 L7.3 9 M9 10 L11.5 12.2 L9 14.5" fill="none" stroke="#d0d0d0" stroke-width="1.1"/></svg><div class="t" style="left:155px;top:487px;font-size:13px;color:#e6e6e6;font-weight:400;">theme1.xml</div><div class="a" style="left:30px;top:504px;width:345px;height:20px;background:#393939;"></div><svg style="left:135px;top:508px" width="15" height="14" viewBox="0 0 15 14"><rect x="0.5" y="0.5" width="13" height="13" fill="#454545" stroke="#c8c8c8"/><path d="M1 10 L4 7.5 L7 10 L10 8 L13.5 10" fill="none" stroke="#4aa3f0" stroke-width="1.2"/><circle cx="10" cy="4" r="1.5" fill="#e8c16a"/></svg><div class="t" style="left:155px;top:507px;font-size:13px;color:#e6e6e6;font-weight:400;">thumbnail.jpeg</div><svg style="left:77px;top:530px" width="7" height="7" viewBox="0 0 7 7"><path d="M6.5 0 V6.5 H0 Z" fill="#d0d0d0"/></svg><svg style="left:99px;top:528px" width="15" height="12" viewBox="0 0 15 12"><path d="M0.5 1.5 V10.5 H13.5 V2.5 H7 L6 0.5 H1.5 Z" fill="#9a8662" stroke="#e8c88a"/><path d="M1 2.5 H6.5" stroke="#e8c88a"/></svg><div class="t" style="left:119px;top:527px;font-size:13px;color:#e6e6e6;font-weight:400;">AnalysisWord</div><svg style="left:95px;top:550px" width="7" height="7" viewBox="0 0 7 7"><path d="M6.5 0 V6.5 H0 Z" fill="#d0d0d0"/></svg><svg style="left:117px;top:548px" width="15" height="12" viewBox="0 0 15 12"><path d="M0.5 1.5 V10.5 H13.5 V2.5 H7 L6 0.5 H1.5 Z" fill="#9a8662" stroke="#e8c88a"/><path d="M1 2.5 H6.5" stroke="#e8c88a"/></svg><div class="t" style="left:137px;top:547px;font-size:13px;color:#e6e6e6;font-weight:400;">Res</div><svg style="left:113px;top:570px" width="7" height="7" viewBox="0 0 7 7"><path d="M6.5 0 V6.5 H0 Z" fill="#d0d0d0"/></svg><svg style="left:135px;top:568px" width="15" height="12" viewBox="0 0 15 12"><path d="M0.5 1.5 V10.5 H13.5 V2.5 H7 L6 0.5 H1.5 Z" fill="#9a8662" stroke="#e8c88a"/><path d="M1 2.5 H6.5" stroke="#e8c88a"/></svg><div class="t" style="left:155px;top:567px;font-size:13px;color:#e6e6e6;font-weight:400;">_rels</div><div class="a" style="left:30px;top:584px;width:345px;height:20px;background:#393939;"></div><svg style="left:154px;top:587px" width="13" height="15" viewBox="0 0 13 15"><path d="M0.5 0.5 H8.5 L11.5 3.5 V13.5 H0.5 Z" fill="#444" stroke="#c8c8c8"/><path d="M8.5 0.5 V3.5 H11.5 Z" fill="#b0b0b0" stroke="#b0b0b0" stroke-width="0.8"/></svg><div class="t" style="left:173px;top:587px;font-size:13px;color:#e6e6e6;font-weight:400;">.rels</div><svg style="left:113px;top:610px" width="7" height="7" viewBox="0 0 7 7"><path d="M6.5 0 V6.5 H0 Z" fill="#d0d0d0"/></svg><svg style="left:135px;top:608px" width="15" height="12" viewBox="0 0 15 12"><path d="M0.5 1.5 V10.5 H13.5 V2.5 H7 L6 0.5 H1.5 Z" fill="#9a8662" stroke="#e8c88a"/><path d="M1 2.5 H6.5" stroke="#e8c88a"/></svg><div class="t" style="left:155px;top:607px;font-size:13px;color:#e6e6e6;font-weight:400;">docProps</div><div class="a" style="left:30px;top:624px;width:345px;height:20px;background:#393939;"></div><svg style="left:151px;top:627px" width="15" height="16" viewBox="0 0 15 16"><path d="M3.5 9 V0.5 H10.5 L13.5 3.5 V13.5 H11.5 M3.5 9 H10 V13.5" fill="#454545" stroke="none"/><path d="M3.5 8.5 V0.5 H10.5 L13.5 3.5 V13.5 H12" fill="none" stroke="#c8c8c8"/><path d="M10.5 0.5 V3.5 H13.5 Z" fill="#c8c8c8" stroke="#c8c8c8"/><path d="M3.5 10 L1 12.2 L3.5 14.5 M5.2 15.5 L7.3 9 M9 10 L11.5 12.2 L9 14.5" fill="none" stroke="#d0d0d0" stroke-width="1.1"/></svg><div class="t" style="left:173px;top:627px;font-size:13px;color:#e6e6e6;font-weight:400;">app.xml</div><div class="a" style="left:30px;top:644px;width:345px;height:20px;background:#393939;"></div><svg style="left:151px;top:647px" width="15" height="16" viewBox="0 0 15 16"><path d="M3.5 9 V0.5 H10.5 L13.5 3.5 V13.5 H11.5 M3.5 9 H10 V13.5" fill="#454545" stroke="none"/><path d="M3.5 8.5 V0.5 H10.5 L13.5 3.5 V13.5 H12" fill="none" stroke="#c8c8c8"/><path d="M10.5 0.5 V3.5 H13.5 Z" fill="#c8c8c8" stroke="#c8c8c8"/><path d="M3.5 10 L1 12.2 L3.5 14.5 M5.2 15.5 L7.3 9 M9 10 L11.5 12.2 L9 14.5" fill="none" stroke="#d0d0d0" stroke-width="1.1"/></svg><div class="t" style="left:173px;top:647px;font-size:13px;color:#e6e6e6;font-weight:400;">core.xml</div><svg style="left:113px;top:670px" width="7" height="7" viewBox="0 0 7 7"><path d="M6.5 0 V6.5 H0 Z" fill="#d0d0d0"/></svg><svg style="left:135px;top:668px" width="15" height="12" viewBox="0 0 15 12"><path d="M0.5 1.5 V10.5 H13.5 V2.5 H7 L6 0.5 H1.5 Z" fill="#9a8662" stroke="#e8c88a"/><path d="M1 2.5 H6.5" stroke="#e8c88a"/></svg><div class="t" style="left:155px;top:667px;font-size:13px;color:#e6e6e6;font-weight:400;">word</div><svg style="left:131px;top:690px" width="7" height="7" viewBox="0 0 7 7"><path d="M6.5 0 V6.5 H0 Z" fill="#d0d0d0"/></svg><svg style="left:153px;top:688px" width="15" height="12" viewBox="0 0 15 12"><path d="M0.5 1.5 V10.5 H13.5 V2.5 H7 L6 0.5 H1.5 Z" fill="#9a8662" stroke="#e8c88a"/><path d="M1 2.5 H6.5" stroke="#e8c88a"/></svg><div class="t" style="left:173px;top:687px;font-size:13px;color:#e6e6e6;font-weight:400;">_rels</div><div class="a" style="left:30px;top:704px;width:345px;height:20px;background:#393939;"></div><svg style="left:172px;top:707px" width="13" height="15" viewBox="0 0 13 15"><path d="M0.5 0.5 H8.5 L11.5 3.5 V13.5 H0.5 Z" fill="#444" stroke="#c8c8c8"/><path d="M8.5 0.5 V3.5 H11.5 Z" fill="#b0b0b0" stroke="#b0b0b0" stroke-width="0.8"/></svg><div class="t" style="left:191px;top:707px;font-size:13px;color:#e6e6e6;font-weight:400;">document.xml.rels</div><svg style="left:131px;top:730px" width="7" height="7" viewBox="0 0 7 7"><path d="M6.5 0 V6.5 H0 Z" fill="#d0d0d0"/></svg><svg style="left:153px;top:728px" width="15" height="12" viewBox="0 0 15 12"><path d="M0.5 1.5 V10.5 H13.5 V2.5 H7 L6 0.5 H1.5 Z" fill="#9a8662" stroke="#e8c88a"/><path d="M1 2.5 H6.5" stroke="#e8c88a"/></svg><div class="t" style="left:173px;top:727px;font-size:13px;color:#e6e6e6;font-weight:400;">theme</div><div class="a" style="left:30px;top:744px;width:345px;height:20px;background:#393939;"></div><svg style="left:169px;top:747px" width="15" height="16" viewBox="0 0 15 16"><path d="M3.5 9 V0.5 H10.5 L13.5 3.5 V13.5 H11.5 M3.5 9 H10 V13.5" fill="#454545" stroke="none"/><path d="M3.5 8.5 V0.5 H10.5 L13.5 3.5 V13.5 H12" fill="none" stroke="#c8c8c8"/><path d="M10.5 0.5 V3.5 H13.5 Z" fill="#c8c8c8" stroke="#c8c8c8"/><path d="M3.5 10 L1 12.2 L3.5 14.5 M5.2 15.5 L7.3 9 M9 10 L11.5 12.2 L9 14.5" fill="none" stroke="#d0d0d0" stroke-width="1.1"/></svg><div class="t" style="left:191px;top:747px;font-size:13px;color:#e6e6e6;font-weight:400;">theme1.xml</div><div class="a" style="left:30px;top:764px;width:345px;height:20px;background:#393939;"></div><svg style="left:151px;top:767px" width="15" height="16" viewBox="0 0 15 16"><path d="M3.5 9 V0.5 H10.5 L13.5 3.5 V13.5 H11.5 M3.5 9 H10 V13.5" fill="#454545" stroke="none"/><path d="M3.5 8.5 V0.5 H10.5 L13.5 3.5 V13.5 H12" fill="none" stroke="#c8c8c8"/><path d="M10.5 0.5 V3.5 H13.5 Z" fill="#c8c8c8" stroke="#c8c8c8"/><path d="M3.5 10 L1 12.2 L3.5 14.5 M5.2 15.5 L7.3 9 M9 10 L11.5 12.2 L9 14.5" fill="none" stroke="#d0d0d0" stroke-width="1.1"/></svg><div class="t" style="left:173px;top:767px;font-size:13px;color:#e6e6e6;font-weight:400;">document.xml</div><div class="a" style="left:30px;top:784px;width:345px;height:20px;background:#393939;"></div><svg style="left:151px;top:787px" width="15" height="16" viewBox="0 0 15 16"><path d="M3.5 9 V0.5 H10.5 L13.5 3.5 V13.5 H11.5 M3.5 9 H10 V13.5" fill="#454545" stroke="none"/><path d="M3.5 8.5 V0.5 H10.5 L13.5 3.5 V13.5 H12" fill="none" stroke="#c8c8c8"/><path d="M10.5 0.5 V3.5 H13.5 Z" fill="#c8c8c8" stroke="#c8c8c8"/><path d="M3.5 10 L1 12.2 L3.5 14.5 M5.2 15.5 L7.3 9 M9 10 L11.5 12.2 L9 14.5" fill="none" stroke="#d0d0d0" stroke-width="1.1"/></svg><div class="t" style="left:173px;top:787px;font-size:13px;color:#e6e6e6;font-weight:400;">document0.xml</div><div class="a" style="left:30px;top:804px;width:345px;height:20px;background:#393939;"></div><svg style="left:151px;top:807px" width="15" height="16" viewBox="0 0 15 16"><path d="M3.5 9 V0.5 H10.5 L13.5 3.5 V13.5 H11.5 M3.5 9 H10 V13.5" fill="#454545" stroke="none"/><path d="M3.5 8.5 V0.5 H10.5 L13.5 3.5 V13.5 H12" fill="none" stroke="#c8c8c8"/><path d="M10.5 0.5 V3.5 H13.5 Z" fill="#c8c8c8" stroke="#c8c8c8"/><path d="M3.5 10 L1 12.2 L3.5 14.5 M5.2 15.5 L7.3 9 M9 10 L11.5 12.2 L9 14.5" fill="none" stroke="#d0d0d0" stroke-width="1.1"/></svg><div class="t" style="left:173px;top:807px;font-size:13px;color:#e6e6e6;font-weight:400;">endnotes.xml</div><div class="a" style="left:30px;top:824px;width:345px;height:20px;background:#393939;"></div><svg style="left:151px;top:827px" width="15" height="16" viewBox="0 0 15 16"><path d="M3.5 9 V0.5 H10.5 L13.5 3.5 V13.5 H11.5 M3.5 9 H10 V13.5" fill="#454545" stroke="none"/><path d="M3.5 8.5 V0.5 H10.5 L13.5 3.5 V13.5 H12" fill="none" stroke="#c8c8c8"/><path d="M10.5 0.5 V3.5 H13.5 Z" fill="#c8c8c8" stroke="#c8c8c8"/><path d="M3.5 10 L1 12.2 L3.5 14.5 M5.2 15.5 L7.3 9 M9 10 L11.5 12.2 L9 14.5" fill="none" stroke="#d0d0d0" stroke-width="1.1"/></svg><div class="t" style="left:173px;top:827px;font-size:13px;color:#e6e6e6;font-weight:400;">footnotes.xml</div><div class="a" style="left:30px;top:844px;width:345px;height:20px;background:#393939;"></div><svg style="left:151px;top:847px" width="15" height="16" viewBox="0 0 15 16"><path d="M3.5 9 V0.5 H10.5 L13.5 3.5 V13.5 H11.5 M3.5 9 H10 V13.5" fill="#454545" stroke="none"/><path d="M3.5 8.5 V0.5 H10.5 L13.5 3.5 V13.5 H12" fill="none" stroke="#c8c8c8"/><path d="M10.5 0.5 V3.5 H13.5 Z" fill="#c8c8c8" stroke="#c8c8c8"/><path d="M3.5 10 L1 12.2 L3.5 14.5 M5.2 15.5 L7.3 9 M9 10 L11.5 12.2 L9 14.5" fill="none" stroke="#d0d0d0" stroke-width="1.1"/></svg><div class="t" style="left:173px;top:847px;font-size:13px;color:#e6e6e6;font-weight:400;">settings.xml</div><div class="a" style="left:30px;top:864px;width:345px;height:20px;background:#393939;"></div><svg style="left:133px;top:867px" width="15" height="16" viewBox="0 0 15 16"><path d="M3.5 9 V0.5 H10.5 L13.5 3.5 V13.5 H11.5 M3.5 9 H10 V13.5" fill="#454545" stroke="none"/><path d="M3.5 8.5 V0.5 H10.5 L13.5 3.5 V13.5 H12" fill="none" stroke="#c8c8c8"/><path d="M10.5 0.5 V3.5 H13.5 Z" fill="#c8c8c8" stroke="#c8c8c8"/><path d="M3.5 10 L1 12.2 L3.5 14.5 M5.2 15.5 L7.3 9 M9 10 L11.5 12.2 L9 14.5" fill="none" stroke="#d0d0d0" stroke-width="1.1"/></svg><div class="t" style="left:155px;top:867px;font-size:13px;color:#e6e6e6;font-weight:400;">[Content_Types].xml</div><svg style="left:77px;top:890px" width="7" height="7" viewBox="0 0 7 7"><path d="M6.5 0 V6.5 H0 Z" fill="#d0d0d0"/></svg><svg style="left:99px;top:888px" width="15" height="12" viewBox="0 0 15 12"><path d="M0.5 1.5 V10.5 H13.5 V2.5 H7 L6 0.5 H1.5 Z" fill="#9a8662" stroke="#e8c88a"/><path d="M1 2.5 H6.5" stroke="#e8c88a"/></svg><div class="t" style="left:119px;top:887px;font-size:13px;color:#e6e6e6;font-weight:400;">models</div><div class="a" style="left:30px;top:904px;width:345px;height:20px;background:#393939;"></div><svg style="left:118px;top:907px" width="13" height="15" viewBox="0 0 13 15"><path d="M0.5 0.5 H8.5 L11.5 3.5 V13.5 H0.5 Z" fill="#444" stroke="#c8c8c8"/><path d="M8.5 0.5 V3.5 H11.5 Z" fill="#b0b0b0" stroke="#b0b0b0" stroke-width="0.8"/></svg><div class="t" style="left:137px;top:907px;font-size:13px;color:#e6e6e6;font-weight:400;">documentai.model</div><svg style="left:79px;top:927px" width="16" height="17" viewBox="0 0 16 17"><path d="M3.5 6 V0.5 H10.5 L13.5 3.5 V14.5 H9.5" fill="#333" stroke="#c8c8c8"/><path d="M10.5 0.5 V3.5 H13.5 Z" fill="#c8c8c8"/><path d="M3 11 L8.5 16" stroke="#d8d8d8" stroke-width="2.2"/><circle cx="3.5" cy="10.5" r="3" fill="#d8d8d8"/><path d="M1 8.5 L3.5 10.5" stroke="#1f1f1f" stroke-width="1.6"/></svg><div class="t" style="left:101px;top:927px;font-size:13px;color:#e6e6e6;font-weight:400;">App.config</div><svg style="left:59px;top:949px" width="6" height="10" viewBox="0 0 6 10"><path d="M0.5 0.5 L5.5 5 L0.5 9.5 Z" fill="none" stroke="#d0d0d0"/></svg><svg style="left:80px;top:949px" width="16" height="12" viewBox="0 0 16 12"><path d="M6.5 2.2 C5.5 0.8 1 0.5 1 5 C1 9.5 5.5 9.2 6.5 7.8" fill="none" stroke="#7ed87e" stroke-width="1.4"/><path d="M10 1 V7 M13 1 V7 M8.5 2.5 H14.5 M8.5 5.5 H14.5" stroke="#7ed87e" stroke-width="1.1"/></svg><div class="t" style="left:101px;top:947px;font-size:13px;color:#e6e6e6;font-weight:400;">Program.cs</div></div><div class="a" style="left:375px;top:144px;width:17px;height:835px;background:#2e2e2e;"></div><div class="a" style="left:379px;top:216px;width:9px;height:745px;background:#4d4d4d;"></div><svg style="left:379px;top:150px" width="9" height="5" viewBox="0 0 9 5"><path d="M0 5 L4.5 0 L9 5 Z" fill="#999"/></svg><svg style="left:379px;top:968px" width="9" height="5" viewBox="0 0 9 5"><path d="M0 0 L4.5 5 L9 0 Z" fill="#999"/></svg><div class="a" style="left:400px;top:67px;width:119px;height:22px;background:#3d3d3d;border-top:2px solid #6e6e6e"></div><div class="t" style="left:404px;top:71px;font-size:12.5px;color:#e8e8e8;font-weight:700;">Program.cs</div><svg style="left:484px;top:76px" width="9" height="9" viewBox="0 0 9 9"><path d="M0 4.5 H3.5 M3.5 0 V8.5" stroke="#e8e8e8"/><path d="M4 1.5 H8.5 V6.5 H4" fill="none" stroke="#e8e8e8"/><rect x="4" y="5" width="4.5" height="1.5" fill="#e8e8e8"/></svg><svg style="left:502px;top:76px" width="10" height="9" viewBox="0 0 10 9"><path d="M0.5 0.5 L9.5 8.5 M9.5 0.5 L0.5 8.5" stroke="#e8e8e8" stroke-width="1.4"/></svg><svg style="left:1114px;top:78px" width="9" height="5" viewBox="0 0 9 5"><path d="M0 0 H9 L4.5 5 Z" fill="#d8d8d8"/></svg><svg style="left:1131px;top:74px" width="10" height="10" viewBox="0 0 10 10"><circle cx="5" cy="5" r="3.2" fill="none" stroke="#d8d8d8" stroke-width="1.8"/><path d="M5 0 V10 M0 5 H10 M1.5 1.5 L8.5 8.5 M8.5 1.5 L1.5 8.5" stroke="#d8d8d8" stroke-width="1.6"/><circle cx="5" cy="5" r="1.6" fill="#1f1f1f"/></svg><div class="a" style="left:400px;top:90px;width:742px;height:23px;background:#2e2e2e;border-bottom:1px solid #3a3a3a"></div><div class="a" style="left:400px;top:91px;width:238px;height:21px;background:#383838;border:1px solid #434343"></div><div class="a" style="left:642px;top:91px;width:237px;height:21px;background:#383838;border:1px solid #434343"></div><div class="a" style="left:883px;top:91px;width:237px;height:21px;background:#383838;border:1px solid #434343"></div><svg style="left:404px;top:95px" width="14" height="13" viewBox="0 0 14 13"><rect x="0.5" y="0.5" width="13" height="12" fill="none" stroke="#b8b8b8"/><path d="M6 4 C5 2.5 2 2.8 2 6.5 C2 10.2 5 10.5 6 9" fill="none" stroke="#7ec87e" stroke-width="1.1"/><path d="M8.5 3 V10 M10.5 3 V10 M7 5 H12 M7 8 H12" stroke="#7ec87e" stroke-width="1"/></svg><div class="t" style="left:421px;top:94px;font-size:13px;color:#e6e6e6;font-weight:400;">ConversionDemo</div><svg style="left:628px;top:100px" width="7" height="4" viewBox="0 0 7 4"><path d="M0 0 H7 L3.5 4 Z" fill="#d0d0d0"/></svg><svg style="left:645px;top:93px" width="16" height="16" viewBox="0 0 16 16"><path d="M1 4 L4 1 L6 3 L3 6 Z M5 4 L9 6" fill="none" stroke="#e8c16a" stroke-width="1.1"/><path d="M8.5 9 C8.5 7 11 6.5 11.5 8.5 C12 6.5 14.5 7 14.5 9 C14.5 11 11.5 13 11.5 14 C11.5 13 8.5 11 8.5 9 Z" fill="#383838" stroke="#d0d0d0" stroke-width="1.1"/></svg><div class="t" style="left:662px;top:94px;font-size:13px;color:#e6e6e6;font-weight:400;">ConversionDemo.Program</div><svg style="left:869px;top:100px" width="7" height="4" viewBox="0 0 7 4"><path d="M0 0 H7 L3.5 4 Z" fill="#d0d0d0"/></svg><svg style="left:885px;top:93px" width="18" height="17" viewBox="0 0 18 17"><path d="M1 4 L6 1 L11 4 V10 L6 13 L1 10 Z M1 4 L6 7 L11 4 M6 7 V13" fill="none" stroke="#a86ce0" stroke-width="1.1"/><rect x="8.5" y="10.5" width="6" height="5" fill="#383838" stroke="#e0e0e0"/><path d="M9.5 10.5 V8.5 A2 2 0 0 1 13.5 8.5 V10.5" fill="none" stroke="#e0e0e0"/></svg><div class="t" style="left:903px;top:94px;font-size:13px;color:#e6e6e6;font-weight:400;">Main(string[] args)</div><svg style="left:1109px;top:100px" width="7" height="4" viewBox="0 0 7 4"><path d="M0 0 H7 L3.5 4 Z" fill="#d0d0d0"/></svg><svg style="left:1124px;top:94px" width="12" height="15" viewBox="0 0 12 15"><path d="M0 6.5 H11 M0 8.5 H11" stroke="#e0e0e0" stroke-width="1"/><path d="M5.5 1 V5 M5.5 10 V14" stroke="#e0e0e0" stroke-width="1"/><path d="M3.5 3 L5.5 1 L7.5 3 M3.5 12 L5.5 14 L7.5 12" fill="none" stroke="#e0e0e0" stroke-width="1"/></svg><div class="a" style="left:400px;top:113px;width:742px;height:484px;background:#1f1f1f;"></div><div class="a" style="left:400px;top:113px;width:19px;height:484px;background:#333333;"></div><div class="a" style="left:1119px;top:113px;width:23px;height:484px;background:#2e2e2e;"></div><div class="a" style="left:1123px;top:130px;width:15px;height:259px;background:#4d4d4d;"></div><div class="a" style="left:1142px;top:113px;width:1px;height:484px;background:#3a3a3a;"></div><svg style="left:1126px;top:119px" width="9" height="5" viewBox="0 0 9 5"><path d="M0 5 L4.5 0 L9 5 Z" fill="#999"/></svg><svg style="left:1126px;top:585px" width="9" height="5" viewBox="0 0 9 5"><path d="M0 0 L4.5 5 L9 0 Z" fill="#999"/></svg><div class="a" style="left:1137px;top:240px;width:5px;height:6px;background:#a0a0a0;"></div><div class="a" style="left:1119px;top:297px;width:23px;height:2px;background:#e0e0e0;"></div><div class="t mono" style="left:431px;top:115.5px;width:51px;text-align:right;font-size:14.6px;transform-origin:100% 0;transform:scaleX(0.927);color:#909090">1</div><div class="t mono" style="left:431px;top:134.5px;width:51px;text-align:right;font-size:14.6px;transform-origin:100% 0;transform:scaleX(0.927);color:#909090">2</div><div class="t mono" style="left:431px;top:153.5px;width:51px;text-align:right;font-size:14.6px;transform-origin:100% 0;transform:scaleX(0.927);color:#909090">3</div><div class="t mono" style="left:431px;top:173px;width:51px;text-align:right;font-size:14.6px;transform-origin:100% 0;transform:scaleX(0.927);color:#909090">4</div><div class="t mono" style="left:431px;top:192px;width:51px;text-align:right;font-size:14.6px;transform-origin:100% 0;transform:scaleX(0.927);color:#909090">5</div><div class="t mono" style="left:431px;top:211.5px;width:51px;text-align:right;font-size:14.6px;transform-origin:100% 0;transform:scaleX(0.927);color:#909090">6</div><div class="t mono" style="left:431px;top:231px;width:51px;text-align:right;font-size:14.6px;transform-origin:100% 0;transform:scaleX(0.927);color:#909090">7</div><div class="t mono" style="left:431px;top:250px;width:51px;text-align:right;font-size:14.6px;transform-origin:100% 0;transform:scaleX(0.927);color:#909090">8</div><div class="t mono" style="left:431px;top:284.5px;width:51px;text-align:right;font-size:14.6px;transform-origin:100% 0;transform:scaleX(0.927);color:#909090">9</div><div class="t mono" style="left:431px;top:303.5px;width:51px;text-align:right;font-size:14.6px;transform-origin:100% 0;transform:scaleX(0.927);color:#909090">10</div><div class="t mono" style="left:431px;top:338px;width:51px;text-align:right;font-size:14.6px;transform-origin:100% 0;transform:scaleX(0.927);color:#909090">11</div><div class="t mono" style="left:431px;top:357.5px;width:51px;text-align:right;font-size:14.6px;transform-origin:100% 0;transform:scaleX(0.927);color:#909090">12</div><div class="t mono" style="left:431px;top:377px;width:51px;text-align:right;font-size:14.6px;transform-origin:100% 0;transform:scaleX(0.927);color:#909090">13</div><div class="t mono" style="left:431px;top:396.5px;width:51px;text-align:right;font-size:14.6px;transform-origin:100% 0;transform:scaleX(0.927);color:#909090">14</div><div class="t mono" style="left:431px;top:416px;width:51px;text-align:right;font-size:14.6px;transform-origin:100% 0;transform:scaleX(0.927);color:#909090">15</div><div class="t mono" style="left:431px;top:435px;width:51px;text-align:right;font-size:14.6px;transform-origin:100% 0;transform:scaleX(0.927);color:#c8c8c8">16</div><div class="t mono" style="left:525px;top:115.5px;font-size:14.6px;transform-origin:0 0;transform:scaleX(0.927)"><span style="color:#569cd6">using </span><span style="color:#dcdcdc">System</span><span style="color:#dcdcdc">;</span></div><div class="t mono" style="left:525px;top:134.5px;font-size:14.6px;transform-origin:0 0;transform:scaleX(0.927)"><span style="color:#569cd6">using </span><span style="color:#dcdcdc">System.Collections.Generic</span><span style="color:#dcdcdc">;</span></div><div class="t mono" style="left:525px;top:153.5px;font-size:14.6px;transform-origin:0 0;transform:scaleX(0.927)"><span style="color:#569cd6">using </span><span style="color:#dcdcdc">System.Linq</span><span style="color:#dcdcdc">;</span></div><div class="t mono" style="left:525px;top:173px;font-size:14.6px;transform-origin:0 0;transform:scaleX(0.927)"><span style="color:#569cd6">using </span><span style="color:#dcdcdc">System.Text</span><span style="color:#dcdcdc">;</span></div><div class="t mono" style="left:525px;top:192px;font-size:14.6px;transform-origin:0 0;transform:scaleX(0.927)"><span style="color:#569cd6">using </span><span style="color:#dcdcdc">System.Threading.Tasks</span><span style="color:#dcdcdc">;</span></div><div class="t mono" style="left:525px;top:231px;font-size:14.6px;transform-origin:0 0;transform:scaleX(0.927)"><span style="color:#569cd6">namespace </span><span style="color:#dcdcdc">ConversionDemo</span></div><div class="t mono" style="left:525px;top:250px;font-size:14.6px;transform-origin:0 0;transform:scaleX(0.927)"><span style="color:#e8912d">{</span></div><div class="t" style="left:541px;top:268px;font-size:12px;color:#9a9a9a;font-weight:400;">0 references</div><div class="t mono" style="left:542px;top:284.5px;font-size:14.6px;transform-origin:0 0;transform:scaleX(0.927)"><span style="color:#569cd6">internal </span><span style="color:#569cd6">class </span><span style="color:#4ec9b0">Program</span></div><div class="t mono" style="left:542px;top:303.5px;font-size:14.6px;transform-origin:0 0;transform:scaleX(0.927)"><span style="color:#ff4d1a">{</span></div><div class="t" style="left:558px;top:322px;font-size:12px;color:#9a9a9a;font-weight:400;">0 references</div><div class="t mono" style="left:558px;top:338px;font-size:14.6px;transform-origin:0 0;transform:scaleX(0.927)"><span style="color:#569cd6">static </span><span style="color:#569cd6">void </span><span style="color:#dcdcaa">Main</span><span style="color:#f5a524">(</span><span style="color:#569cd6">string</span><span style="color:#d7ba7d">[]</span><span style="color:#dcdcdc"> </span><span style="color:#9cdcfe">args</span><span style="color:#f5a524">)</span></div><div class="t mono" style="left:558px;top:357.5px;font-size:14.6px;transform-origin:0 0;transform:scaleX(0.927)"><span style="color:#ffd21a">{</span></div><div class="t mono" style="left:558px;top:377px;font-size:14.6px;transform-origin:0 0;transform:scaleX(0.927)"><span style="color:#ffd21a">}</span></div><div class="t mono" style="left:542px;top:396.5px;font-size:14.6px;transform-origin:0 0;transform:scaleX(0.927)"><span style="color:#ff4d1a">}</span></div><div class="t mono" style="left:525px;top:416px;font-size:14.6px;transform-origin:0 0;transform:scaleX(0.927)"><span style="color:#e8912d">}</span></div><svg style="left:771px;top:354px" width="12" height="2" viewBox="0 0 12 2"><rect x="0" y="0" width="1.5" height="1.5" fill="#aaa"/><rect x="4" y="0" width="1.5" height="1.5" fill="#aaa"/><rect x="8" y="0" width="1.5" height="1.5" fill="#aaa"/></svg><div class="a" style="left:518px;top:128px;width:1px;height:82px;background:#a8a8a8;"></div><div class="a" style="left:518px;top:209px;width:5px;height:1px;background:#a8a8a8;"></div><div class="a" style="left:518px;top:244px;width:1px;height:189px;background:#a8a8a8;"></div><div class="a" style="left:518px;top:394px;width:5px;height:1px;background:#a8a8a8;"></div><div class="a" style="left:518px;top:413px;width:5px;height:1px;background:#a8a8a8;"></div><div class="a" style="left:518px;top:432px;width:5px;height:1px;background:#a8a8a8;"></div><svg style="left:513px;top:118px" width="10" height="10" viewBox="0 0 10 10"><rect x="0.5" y="0.5" width="9" height="9" fill="#1f1f1f" stroke="#c0c0c0"/><path d="M2.5 4.5 H7.5" stroke="#e8e8e8" stroke-width="1.3"/></svg><svg style="left:513px;top:234px" width="10" height="10" viewBox="0 0 10 10"><rect x="0.5" y="0.5" width="9" height="9" fill="#1f1f1f" stroke="#c0c0c0"/><path d="M2.5 4.5 H7.5" stroke="#e8e8e8" stroke-width="1.3"/></svg><svg style="left:513px;top:288px" width="10" height="10" viewBox="0 0 10 10"><rect x="0.5" y="0.5" width="9" height="9" fill="#1f1f1f" stroke="#c0c0c0"/><path d="M2.5 4.5 H7.5" stroke="#e8e8e8" stroke-width="1.3"/></svg><svg style="left:513px;top:341px" width="10" height="10" viewBox="0 0 10 10"><rect x="0.5" y="0.5" width="9" height="9" fill="#1f1f1f" stroke="#c0c0c0"/><path d="M2.5 4.5 H7.5" stroke="#e8e8e8" stroke-width="1.3"/></svg><div class="a" style="left:528px;top:269px;width:1px;height:143px;background:repeating-linear-gradient(#8a8a8a 0 3px,transparent 3px 5px)"></div><div class="a" style="left:544px;top:323px;width:1px;height:73px;background:repeating-linear-gradient(#8a8a8a 0 3px,transparent 3px 5px)"></div><div class="a" style="left:400px;top:597px;width:742px;height:19px;background:#2d2d2d;border-bottom:1px solid #3a3a3a"></div><div class="a" style="left:400px;top:597px;width:60px;height:18px;background:#333333;border:1px solid #3c3c3c"></div><div class="t" style="left:402px;top:599px;font-size:11.5px;color:#e0e0e0;font-weight:400;">114 %</div><svg style="left:451px;top:605px" width="6" height="3" viewBox="0 0 6 3"><path d="M0 0 H6 L3 3 Z" fill="#d0d0d0"/></svg><svg style="left:462px;top:599px" width="14" height="15" viewBox="0 0 14 15"><path d="M5 12 V9 C2 7 3 1 8 1 C12 1 13 5 12 8 L10.5 10 V14" fill="none" stroke="#a86ce0" stroke-width="1.1"/><path d="M2 14 L6 9" stroke="#a86ce0" stroke-width="2"/><circle cx="3" cy="11" r="2.3" fill="none" stroke="#a86ce0" stroke-width="1.3"/><path d="M6 4 C7 3 9 3 10 4 M8 5 V11" fill="none" stroke="#a86ce0"/></svg><svg style="left:503px;top:600px" width="12" height="12" viewBox="0 0 12 12"><circle cx="5.75" cy="5.75" r="5.75" fill="#8ee08e"/><path d="M3 6 L5 8 L8.8 4.2" fill="none" stroke="#1a1a1a" stroke-width="1.4"/></svg><div class="t" style="left:519px;top:599px;font-size:12px;color:#e6e6e6;font-weight:400;">No issues found</div><div class="a" style="left:663px;top:600px;width:1px;height:12px;background:#c0c0c0;"></div><svg style="left:677px;top:598px" width="14" height="15" viewBox="0 0 14 15"><path d="M8 6 L13 0.5" stroke="#c8c8c8" stroke-width="1.6" stroke-dasharray="1.5 0.8"/><path d="M3 7 L8 5 L10 8 L7 14 L3 13 Z" fill="#dcb67a"/><path d="M4.5 9 L5 13 M7 8 L6.5 13" stroke="#1f1f1f" stroke-width="0.8"/><path d="M0.5 2.5 H3.5 M2 1 V4" stroke="#4aa3f0"/><path d="M6 1 L8 1 L7 2.5 Z" fill="#a86ce0"/></svg><svg style="left:695px;top:605px" width="7" height="4" viewBox="0 0 7 4"><path d="M0 0 H7 L3.5 4 Z" fill="#e0e0e0"/></svg><div class="a" style="left:726px;top:598px;width:17px;height:17px;background:#333333;"></div><svg style="left:731px;top:601px" width="6" height="10" viewBox="0 0 6 10"><path d="M6 0 L0 5 L6 10 Z" fill="#777"/></svg><div class="a" style="left:934px;top:598px;width:17px;height:17px;background:#333333;"></div><svg style="left:938px;top:601px" width="6" height="10" viewBox="0 0 6 10"><path d="M0 0 L6 5 L0 10 Z" fill="#777"/></svg><div class="t" style="left:972px;top:599px;font-size:11.5px;color:#e6e6e6;font-weight:400;">Ln: 16</div><div class="t" style="left:1020px;top:599px;font-size:11.5px;color:#e6e6e6;font-weight:400;">Ch: 1</div><div class="a" style="left:1056px;top:598px;width:40px;height:17px;background:#2b2b2b;border:1px solid #3e3e3e"></div><div class="t" style="left:1066px;top:599px;font-size:11px;color:#e6e6e6;font-weight:400;">SPC</div><div class="a" style="left:1097px;top:598px;width:45px;height:17px;background:#2b2b2b;border:1px solid #3e3e3e"></div><div class="t" style="left:1106px;top:599px;font-size:11px;color:#e6e6e6;font-weight:400;">CRLF</div><div class="a" style="left:399px;top:622px;width:744px;height:337px;background:#1f1f1f;border:1px solid #3c3c3c"></div><div class="t" style="left:404px;top:627px;font-size:13px;color:#d8d8d8;font-weight:400;">Output</div><svg style="left:1090px;top:633px" width="8" height="4" viewBox="0 0 8 4"><path d="M0 0 H8 L4 4 Z" fill="#e0e0e0"/></svg><svg style="left:1107px;top:629px" width="9" height="12" viewBox="0 0 9 12"><path d="M1.5 0.5 H6.5 V6.5 H1.5 Z" fill="none" stroke="#e8e8e8"/><rect x="5" y="1" width="1.5" height="5.5" fill="#e8e8e8"/><path d="M0 6.5 H8.5 M4.5 6.5 V11" stroke="#e8e8e8"/></svg><svg style="left:1124px;top:631px" width="10" height="9" viewBox="0 0 10 9"><path d="M0.5 0.5 L9.5 8.5 M9.5 0.5 L0.5 8.5" stroke="#e8e8e8" stroke-width="1.4"/></svg><div class="t" style="left:407px;top:651px;font-size:13.3px;color:#e6e6e6;font-weight:400;">Show output from:</div><div class="a" style="left:521px;top:649px;width:300px;height:20px;background:#393939;border:1px solid #474747"></div><svg style="left:810px;top:657px" width="7" height="4" viewBox="0 0 7 4"><path d="M0 0 H7 L3.5 4 Z" fill="#d0d0d0"/></svg><div class="a" style="left:827px;top:650px;width:1px;height:18px;background:#3d3d3d;"></div><div class="a" style="left:857px;top:650px;width:1px;height:18px;background:#3d3d3d;"></div><div class="a" style="left:909px;top:650px;width:1px;height:18px;background:#3d3d3d;"></div><div class="a" style="left:939px;top:650px;width:1px;height:18px;background:#3d3d3d;"></div><div class="a" style="left:969px;top:650px;width:1px;height:18px;background:#3d3d3d;"></div><svg style="left:836px;top:652px" width="14" height="14" viewBox="0 0 14 14"><path d="M1 12.5 H13 M1 9.5 H13 M4 7 V1.5 C4 0 7 0 7 2 M2.5 5 L4 7 L5.5 5" fill="none" stroke="#4a4a4a"/></svg><svg style="left:865px;top:652px" width="14" height="14" viewBox="0 0 14 14"><path d="M2 12.5 H14 M2 9.5 H14 M1 2.5 H10 M3.5 0 L1 2.5 L3.5 5" fill="none" stroke="#4a4a4a"/></svg><svg style="left:886px;top:652px" width="14" height="14" viewBox="0 0 14 14"><path d="M1 12.5 H13 M1 9.5 H13 M2 2.5 H12 M9.5 0 L12 2.5 L9.5 5" fill="none" stroke="#4a4a4a"/></svg><svg style="left:918px;top:652px" width="14" height="14" viewBox="0 0 14 14"><path d="M1 0.5 L5 4.5 M5 0.5 L1 4.5 M7 1.5 H14 M7 4.5 H14 M0 7.5 H14 M0 10.5 H14 M0 13.5 H14" fill="none" stroke="#4a4a4a"/></svg><div class="t" style="left:948px;top:647px;font-size:9px;color:#e0e0e0;font-weight:400;">ab</div><div class="t" style="left:948px;top:655px;font-size:9px;color:#e0e0e0;font-weight:400;">c</div><svg style="left:953px;top:651px" width="11" height="16" viewBox="0 0 11 16"><path d="M5.5 6.5 H9.5 V12.5 H1.5 M4 10 L1.5 12.5 L4 15" fill="none" stroke="#4aa3f0" stroke-width="1.2"/></svg><svg style="left:977px;top:651px" width="16" height="16" viewBox="0 0 16 16"><circle cx="8" cy="8" r="6.8" fill="none" stroke="#e0e0e0" stroke-width="1.3"/><path d="M8 4 V8.5 H11" fill="none" stroke="#e0e0e0" stroke-width="1.2"/></svg><div class="t" style="left:405px;top:961px;font-size:12.8px;color:#d0d0d0;font-weight:400;">Call Hierarchy</div><div class="t" style="left:497px;top:961px;font-size:13.1px;color:#d0d0d0;font-weight:400;">Package Manager Console</div><div class="t" style="left:666px;top:961px;font-size:12.8px;color:#d0d0d0;font-weight:400;">Error List</div><div class="t" style="left:731px;top:961px;font-size:12.8px;color:#d0d0d0;font-weight:400;">Command Window</div><div class="t" style="left:1021px;top:961px;font-size:12.8px;color:#d0d0d0;font-weight:400;">Find Symbol Results</div><svg style="left:854px;top:961px" width="38" height="14" viewBox="0 0 38 14"><g fill="none" stroke="#d0d0d0" stroke-width="1"><path d="M1 2.5 H11 M0 6.5 H12 M4.5 2.5 V8 C4.5 10 3 12 0.5 13.5 M8.5 2.5 V13.5"/><path d="M15.5 2 V6 M18.5 2 V6 M21 2 L22 3.5 M12 6.5 H24 M18 6.5 C17 9 15 12 12.5 13.5 M16 8.5 H22 C21 11 18 13 15 13.5 M16.5 9 C18 11 21 13 24 13.5"/><path d="M27 3.5 H35 M31.5 1 V6 M25 6.5 H37 M35 1.5 L28 8.5 M28.5 8.5 H35.5 V13.5 H28.5 Z M28.5 11 H35.5"/></g></svg><div class="t" style="left:895px;top:961px;font-size:12.8px;color:#d0d0d0;font-weight:400;">PowerShell</div><div class="a" style="left:963px;top:958px;width:51px;height:22px;background:#1f1f1f;border:1px solid #3c3c3c;border-top:none"></div><div class="t" style="left:969px;top:961px;font-size:12.8px;color:#f0f0f0;font-weight:400;">Output</div><div class="a" style="left:1149px;top:67px;width:451px;height:912px;background:#1f1f1f;border-left:1px solid #3c3c3c;border-bottom:1px solid #3c3c3c"></div><div class="a" style="left:1150px;top:68px;width:450px;height:2px;background:#7160e8;"></div><div class="t" style="left:1154px;top:72px;font-size:13px;color:#e6e6e6;font-weight:400;">Properties</div><svg style="left:1222px;top:77px" width="320" height="6" viewBox="0 0 320 6"><defs><pattern id="gp" width="4" height="4" patternUnits="userSpaceOnUse"><rect x="0" y="0" width="1" height="1" fill="#5a5a5a"/><rect x="2" y="2" width="1" height="1" fill="#5a5a5a"/></pattern></defs><rect width="320" height="5" fill="url(#gp)"/></svg><svg style="left:1550px;top:78px" width="8" height="4" viewBox="0 0 8 4"><path d="M0 0 H8 L4 4 Z" fill="#e0e0e0"/></svg><svg style="left:1567px;top:74px" width="9" height="12" viewBox="0 0 9 12"><path d="M1.5 0.5 H6.5 V6.5 H1.5 Z" fill="none" stroke="#e8e8e8"/><rect x="5" y="1" width="1.5" height="5.5" fill="#e8e8e8"/><path d="M0 6.5 H8.5 M4.5 6.5 V11" stroke="#e8e8e8"/></svg><svg style="left:1584px;top:76px" width="10" height="9" viewBox="0 0 10 9"><path d="M0.5 0.5 L9.5 8.5 M9.5 0.5 L0.5 8.5" stroke="#e8e8e8" stroke-width="1.4"/></svg><div class="a" style="left:1150px;top:91px;width:450px;height:24px;background:#393939;"></div><svg style="left:1592px;top:102px" width="7" height="4" viewBox="0 0 7 4"><path d="M0 0 H7 L3.5 4 Z" fill="#d0d0d0"/></svg><div class="a" style="left:1153px;top:117px;width:23px;height:22px;background:transparent;border:1px solid #7160e8"></div><svg style="left:1156px;top:120px" width="16" height="16" viewBox="0 0 16 16"><rect x="1" y="1" width="5" height="5" fill="#c8c8c8"/><rect x="1" y="10" width="5" height="5" fill="#c8c8c8"/><path d="M2.5 3.5 H4.5 M3.5 2.5 V4.5 M2.5 12.5 H4.5 M3.5 11.5 V13.5" stroke="#1f1f1f"/><path d="M7 1.5 H12 M7 3.5 H12 M7 5.5 H12 M7 7.5 H12 M7 9.5 H12 M7 11.5 H12 M7 13.5 H12" stroke="#c8c8c8"/><path d="M13 3.5 H15 M13 5.5 H15 M13 7.5 H15 M13 9.5 H15 M13 13.5 H15" stroke="#c8c8c8"/></svg><svg style="left:1179px;top:120px" width="17" height="16" viewBox="0 0 17 16"><rect x="1" y="1" width="7" height="7" fill="#c8c8c8"/><path d="M2.5 7 L4.5 2 L6.5 7 M3.2 5.5 H5.8" fill="none" stroke="#1f1f1f" stroke-width="1.1"/><path d="M1.5 10.2 H7 L2 14.5 H7.5" fill="none" stroke="#c8c8c8" stroke-width="1.6"/><path d="M12 4 V13 M9.5 10 L12 13 L14.5 10" fill="none" stroke="#4fc3f7" stroke-width="2"/></svg><div class="a" style="left:1202px;top:118px;width:1px;height:20px;background:#3d3d3d;"></div><svg style="left:1207px;top:119px" width="18" height="18" viewBox="0 0 18 18"><path d="M2 16 L9 9" stroke="#8a8a8a" stroke-width="3.5"/><circle cx="12" cy="6" r="5" fill="#8a8a8a"/><path d="M12 3 L14.5 5.5" stroke="#6a6a6a" stroke-width="1.5"/></svg><div class="a" style="left:1150px;top:141px;width:450px;height:154px;background:#2e2e2e;"></div><svg style="left:1153px;top:147px" width="10" height="10" viewBox="0 0 10 10"><rect x="0.5" y="0.5" width="9" height="9" fill="none" stroke="#e8e8e8"/><path d="M2.5 4.5 H7.5" stroke="#e8e8e8" stroke-width="1.2"/></svg><div class="t" style="left:1169px;top:145px;font-size:12.8px;color:#f8f8f8;font-weight:700;">Advanced</div><div class="a" style="left:1165px;top:162px;width:204px;height:18px;background:#1f1f1f;"></div><div class="a" style="left:1370px;top:162px;width:230px;height:18px;background:#1f1f1f;"></div><div class="t" style="left:1169px;top:164px;font-size:13.3px;color:#e6e6e6;font-weight:400;">Build Action</div><div class="a" style="left:1165px;top:181px;width:204px;height:18px;background:#7160e8;"></div><div class="a" style="left:1370px;top:181px;width:230px;height:18px;background:#1f1f1f;"></div><div class="t" style="left:1169px;top:183px;font-size:13.3px;color:#f0f0f0;font-weight:400;">Copy to Output Directory</div><div class="a" style="left:1165px;top:200px;width:204px;height:18px;background:#1f1f1f;"></div><div class="a" style="left:1370px;top:200px;width:230px;height:18px;background:#1f1f1f;"></div><div class="t" style="left:1169px;top:202px;font-size:13.3px;color:#e6e6e6;font-weight:400;">Custom Tool</div><div class="a" style="left:1165px;top:219px;width:204px;height:18px;background:#1f1f1f;"></div><div class="a" style="left:1370px;top:219px;width:230px;height:18px;background:#1f1f1f;"></div><div class="t" style="left:1169px;top:221px;font-size:13.3px;color:#e6e6e6;font-weight:400;">Custom Tool Namespace</div><svg style="left:1153px;top:242px" width="10" height="10" viewBox="0 0 10 10"><rect x="0.5" y="0.5" width="9" height="9" fill="none" stroke="#e8e8e8"/><path d="M2.5 4.5 H7.5" stroke="#e8e8e8" stroke-width="1.2"/></svg><div class="t" style="left:1169px;top:240px;font-size:12.8px;color:#f8f8f8;font-weight:700;">Misc</div><div class="a" style="left:1165px;top:257px;width:204px;height:18px;background:#1f1f1f;"></div><div class="a" style="left:1370px;top:257px;width:230px;height:18px;background:#1f1f1f;"></div><div class="t" style="left:1169px;top:259px;font-size:13.3px;color:#e6e6e6;font-weight:400;">File Name</div><div class="a" style="left:1165px;top:276px;width:204px;height:18px;background:#1f1f1f;"></div><div class="a" style="left:1370px;top:276px;width:230px;height:18px;background:#1f1f1f;"></div><div class="t" style="left:1169px;top:278px;font-size:13.3px;color:#e6e6e6;font-weight:400;">Full Path</div><div class="t" style="left:1373px;top:183px;font-size:13.3px;color:#e6e6e6;font-weight:400;">Copy if newer</div><div class="a" style="left:1584px;top:182px;width:16px;height:17px;background:#f0f0f0;"></div><svg style="left:1587px;top:188px" width="9" height="5" viewBox="0 0 9 5"><path d="M0.5 0.5 L4.5 4.5 L8.5 0.5" fill="none" stroke="#555"/></svg><div class="a" style="left:1149px;top:916px;width:451px;height:64px;background:#1f1f1f;border-top:1px solid #3c3c3c;border-left:1px solid #3c3c3c;border-bottom:1px solid #3c3c3c"></div><div class="t" style="left:1156px;top:924px;font-size:13.3px;color:#f0f0f0;font-weight:700;">Copy to Output Directory</div><div class="t" style="left:1156px;top:942px;font-size:13.3px;color:#e6e6e6;font-weight:400;">Specifies the source file will be copied to the output directory.</div><div class="a" style="left:0px;top:986px;width:1600px;height:19px;background:#434343;"></div><svg style="left:0px;top:990px" width="18" height="15" viewBox="0 0 18 15"><path d="M1.5 0.5 H15.5 Q16.5 0.5 16.5 1.5 V11.5 Q16.5 12.5 15.5 12.5 H11.5 L9 15 L6.5 12.5 H1.5 Q0.5 12.5 0.5 11.5 V1.5 Q0.5 0.5 1.5 0.5 Z" fill="#3e3e3e" stroke="#e0e0e0"/></svg><div class="t" style="left:25px;top:991px;font-size:13px;color:#f0f0f0;font-weight:400;">Ready</div><svg style="left:1214px;top:990px" width="10" height="15" viewBox="0 0 10 15"><path d="M5 1 V15 M1 5 L5 1 L9 5" fill="none" stroke="#e0e0e0" stroke-width="1.1"/></svg><div class="t" style="left:1234px;top:991px;font-size:13.3px;color:#f0f0f0;font-weight:400;">Add to Source Control</div><svg style="left:1371px;top:994px" width="8" height="5" viewBox="0 0 8 5"><path d="M0 5 L4 0 L8 5 Z" fill="#e0e0e0"/></svg><svg style="left:1402px;top:991px" width="14" height="14" viewBox="0 0 14 14"><rect x="1.5" y="2.5" width="11" height="11" fill="none" stroke="#e0e0e0"/><path d="M0 0.5 H14 M5 6 V10 H9 V6" fill="none" stroke="#e0e0e0"/></svg><div class="t" style="left:1423px;top:991px;font-size:13.3px;color:#f0f0f0;font-weight:400;">Select Repository</div><svg style="left:1530px;top:994px" width="8" height="5" viewBox="0 0 8 5"><path d="M0 5 L4 0 L8 5 Z" fill="#e0e0e0"/></svg><svg style="left:1561px;top:990px" width="16" height="15" viewBox="0 0 16 15"><path d="M2 12 C3 10 3 8 3 6 C3 2 10 2 10 6 C10 8 10 10 11 12 Z" fill="none" stroke="#e0e0e0"/><circle cx="11.5" cy="11.5" r="4" fill="#e65f78"/></svg></body></html>
